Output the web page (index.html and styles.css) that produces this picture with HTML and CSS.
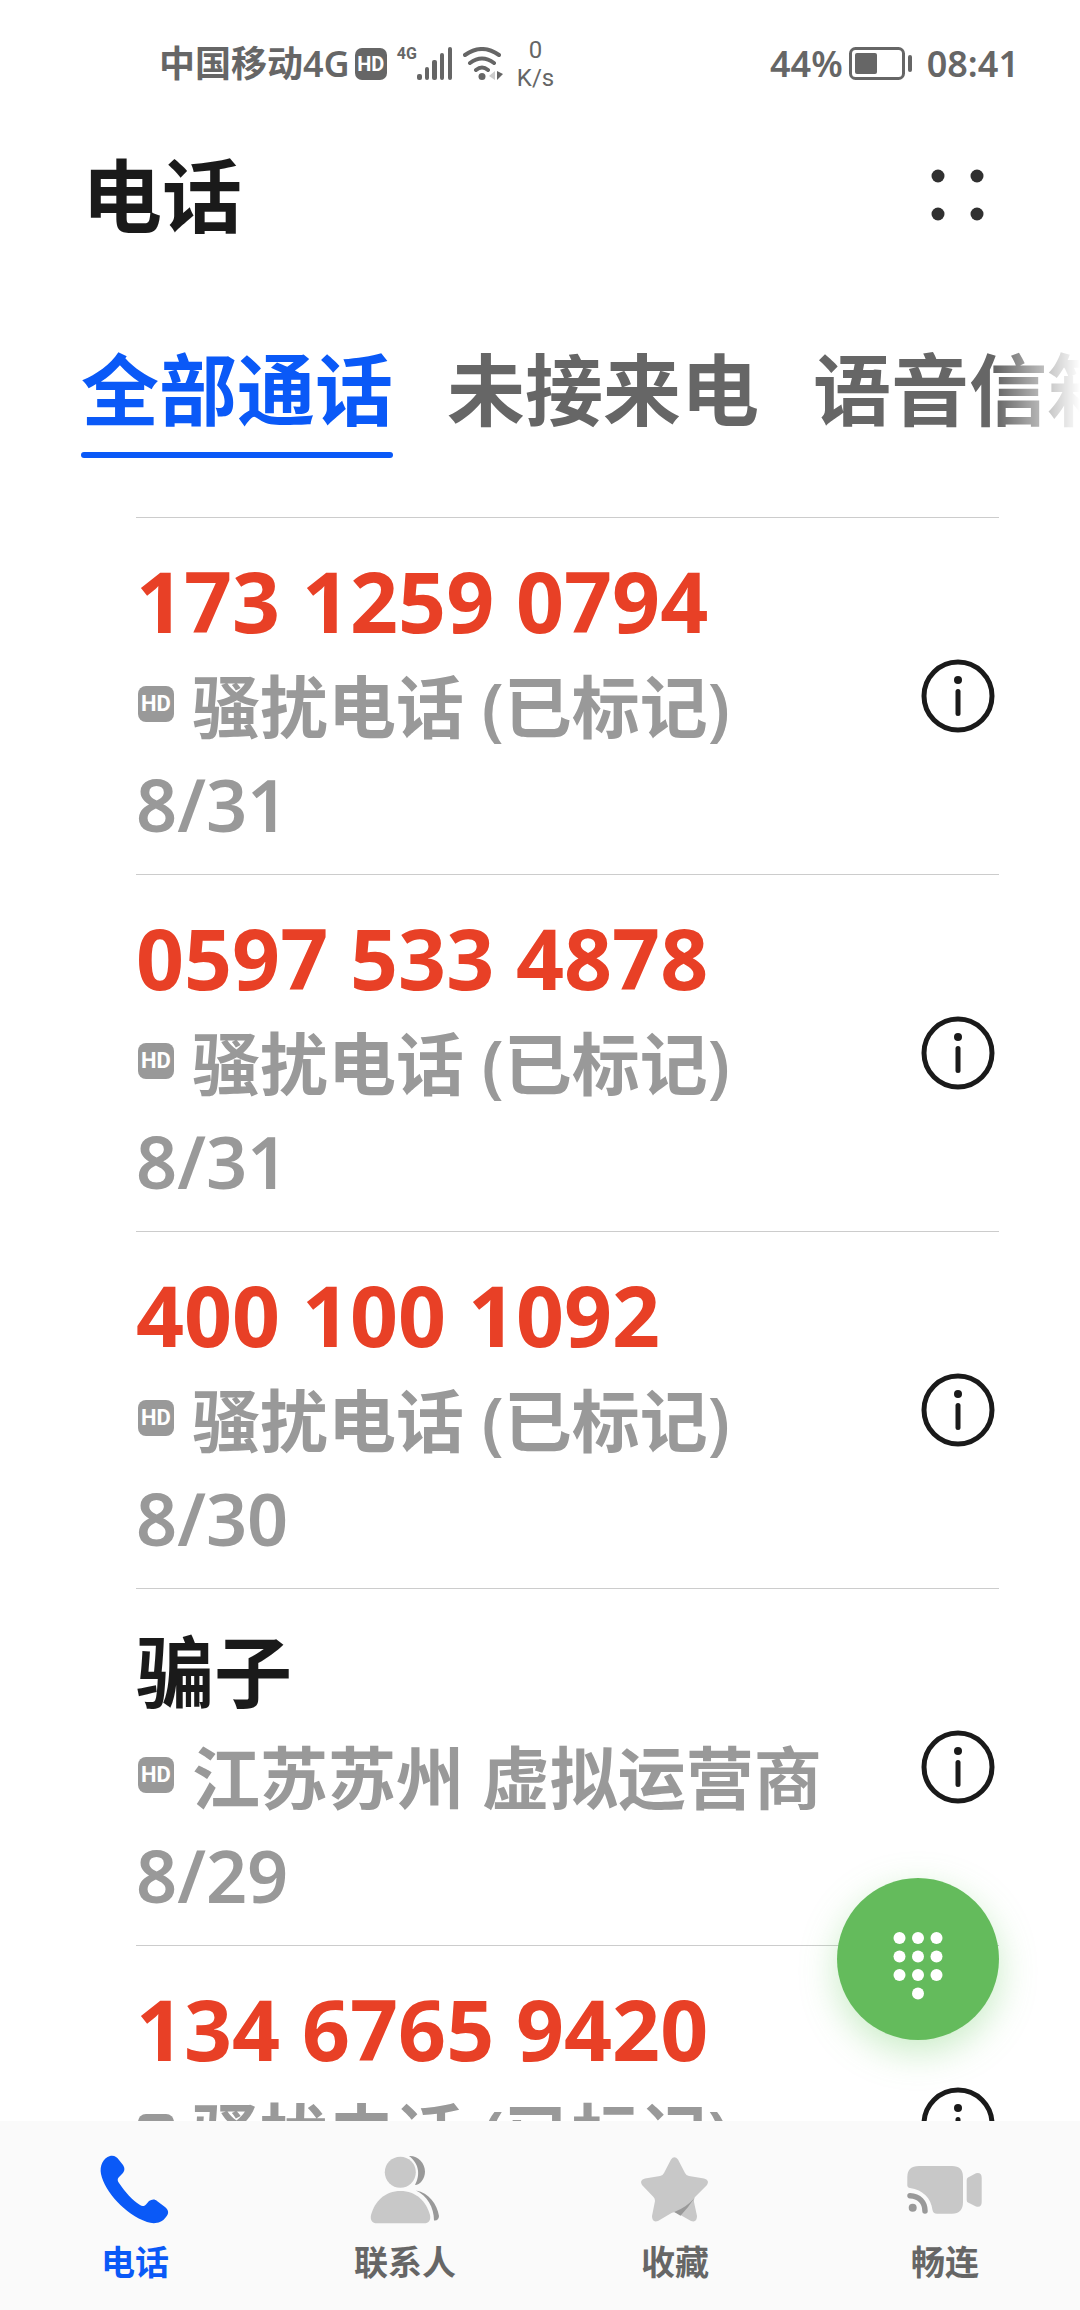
FILE: index.html
```html
<!DOCTYPE html>
<html lang="zh-CN">
<head>
<meta charset="utf-8">
<meta name="viewport" content="width=device-width, initial-scale=1">
<title>电话</title>
<link rel="stylesheet" href="styles.css">
</head>
<body>
<div class="status">
  <div class="status-left">
    <span>中国移动4G</span>
    <span class="hd hd-status">HD</span>
    <span class="net">4G</span>
    <svg class="signal" width="36" height="34" viewBox="0 0 36 34" fill="#666" aria-hidden="true">
      <rect x="0" y="27" width="5" height="6" rx="2"/><rect x="8" y="20" width="4" height="13" rx="2"/><rect x="15" y="13" width="5" height="20" rx="2"/><rect x="23" y="6" width="4" height="27" rx="2"/><rect x="31" y="0" width="4" height="33" rx="2"/>
    </svg>
    <svg class="wifi" width="42" height="34" viewBox="0 0 42 34" fill="none" stroke="#666" stroke-width="4" stroke-linecap="round" aria-hidden="true">
      <path d="M2 8Q19-4 36 8M7 16Q19 7 31 16M13 23Q19 18 25 23"/><circle cx="19" cy="29.500" r="3.500" fill="#666" stroke="none"/>
      <path d="M32 24v9l-6-4z" fill="#ccc" stroke="none"/><path d="M34 24v9l6-6z" fill="#666" stroke="none"/>
    </svg>
    <span class="speed"><span>0</span><span>K/s</span></span>
  </div>
  <div class="status-right">
    <span>44%</span>
    <svg width="64" height="34" viewBox="0 0 64 34" fill="none" aria-hidden="true">
      <rect x="1.500" y="1.500" width="53" height="30" rx="5" stroke="#666" stroke-width="3"/><rect x="6" y="6" width="22" height="21" rx="2" fill="#666"/><rect x="59" y="8" width="4" height="17" rx="2" fill="#666"/>
    </svg>
    <span class="clock">08:41</span>
  </div>
</div>
<header class="header">
  <h1>电话</h1>
  <button class="more" type="button" aria-label="更多">
    <svg width="54" height="54" viewBox="0 0 54 54" fill="#303030" aria-hidden="true"><circle cx="8" cy="8" r="6.500"/><circle cx="47" cy="8" r="6.500"/><circle cx="8" cy="46" r="6.500"/><circle cx="47" cy="46" r="6.500"/></svg>
  </button>
</header>
<nav class="tabs">
  <a class="tab tab-active" href="#all">全部通话</a>
  <a class="tab" href="#missed">未接来电</a>
  <a class="tab" href="#voicemail">语音信箱</a>
</nav>
<svg class="defs" width="0" height="0" aria-hidden="true">
  <symbol id="info" viewBox="0 0 74 74"><circle cx="37" cy="37" r="34" fill="none" stroke="#1a1a1a" stroke-width="5"/><circle cx="37" cy="21" r="4" fill="#1a1a1a"/><rect x="34.500" y="30" width="5" height="27" rx="2.500" fill="#1a1a1a"/></symbol>
</svg>
<main class="calls">
  <ul class="list">
    <li class="call">
      <div class="call-text"><div class="name spam">173 1259 0794</div><div class="place"><span class="hd">HD</span>骚扰电话 (已标记)</div><div class="date">8/31</div></div>
      <button class="info" type="button" aria-label="详情"><svg width="74" height="74"><use href="#info"/></svg></button>
    </li>
    <li class="call">
      <div class="call-text"><div class="name spam">0597 533 4878</div><div class="place"><span class="hd">HD</span>骚扰电话 (已标记)</div><div class="date">8/31</div></div>
      <button class="info" type="button" aria-label="详情"><svg width="74" height="74"><use href="#info"/></svg></button>
    </li>
    <li class="call">
      <div class="call-text"><div class="name spam">400 100 1092</div><div class="place"><span class="hd">HD</span>骚扰电话 (已标记)</div><div class="date">8/30</div></div>
      <button class="info" type="button" aria-label="详情"><svg width="74" height="74"><use href="#info"/></svg></button>
    </li>
    <li class="call">
      <div class="call-text"><div class="name contact">骗子</div><div class="place"><span class="hd">HD</span>江苏苏州 虚拟运营商</div><div class="date">8/29</div></div>
      <button class="info" type="button" aria-label="详情"><svg width="74" height="74"><use href="#info"/></svg></button>
    </li>
    <li class="call">
      <div class="call-text"><div class="name spam">134 6765 9420</div><div class="place"><span class="hd">HD</span>骚扰电话 (已标记)</div></div>
      <button class="info" type="button" aria-label="详情"><svg width="74" height="74"><use href="#info"/></svg></button>
    </li>
  </ul>
  <button class="dial" type="button" aria-label="拨号">
    <svg width="50" height="68" viewBox="0 0 50 68" fill="#fff" aria-hidden="true"><circle cx="6.500" cy="6" r="6"/><circle cx="25" cy="6" r="6"/><circle cx="43.500" cy="6" r="6"/><circle cx="6.500" cy="24.500" r="6"/><circle cx="25" cy="24.500" r="6"/><circle cx="43.500" cy="24.500" r="6"/><circle cx="6.500" cy="43" r="6"/><circle cx="25" cy="43" r="6"/><circle cx="43.500" cy="43" r="6"/><circle cx="25" cy="61.500" r="6"/></svg>
  </button>
</main>
<nav class="bottom">
  <a class="item item-active" href="#phone">
    <svg width="72" height="72" viewBox="0 0 72 72" aria-hidden="true"><path fill="#0a59f7" d="M11 2C15 1 18 3 20 6L24 11C26 14 26 17 23 20L20 23C18 25 18.500 27 20 29C26 38 33 46 41 51C43 52.500 45 52.500 47 50.500L50 47C53 45 56 45 58 47L66 53C70 56 70 60 67 63C62 70 54 70 48 68C26 60 6 38 2 20C.5 12 4 4 11 2Z"/></svg>
    <span>电话</span>
  </a>
  <a class="item" href="#contacts">
    <svg width="72" height="72" viewBox="0 0 72 72" aria-hidden="true"><g fill="#c8c8c8"><circle cx="31.300" cy="18.300" r="15.500"/><path d="M31.500 37C47 37 57 47 61 61C62 66 60 69.300 55 69.300H8C3 69.300 1 66 2 61C6 47 16 37 31.500 37Z"/></g><g fill="#999"><path d="M40 2C49 1.500 56 9 56 17.500C56 25 51 31 46 31C51 22 51 10 40 2Z"/><path d="M47 36.500C60 39 68 50 70 62C70 65 68 67 65 66.500C65 53 58 42 47 36.500Z"/></g></svg>
    <span>联系人</span>
  </a>
  <a class="item" href="#favorites">
    <svg width="72" height="72" viewBox="0 0 72 72" aria-hidden="true"><path fill="#c8c8c8" d="M32 5.500Q35.300 1 39 5.500L46 19Q47 21.500 50 22L65 24.500Q71 26 68 31L56 43Q54.500 45 55 48L58 62Q58 69 52 67L38 59Q35.300 57.500 32.500 59L19 67Q13 69 13 62L16 47Q16 44.500 14.500 43L3 31Q0 26 6 24.500L21 22Q24 21.500 25 19Z"/><path fill="#999" d="M55.500 44Q48 53 35.300 58L41.500 61.700Q49 54 55.500 44Z"/></svg>
    <span>收藏</span>
  </a>
  <a class="item" href="#meetime">
    <svg class="wide" width="72" height="72" viewBox="0 0 72 72" aria-hidden="true"><g fill="#c8c8c8"><path d="M10 12H43Q54 12 54 23V48Q54 59.700 43 59.700H28Q24 59.700 23.500 56C22 44 14 36 1 34Q-1.700 33.700-1.700 31V23Q-1.700 12 10 12Z"/><path d="M59 23.500L67 19.300Q72.700 18 72.700 24V48Q72.700 54 67 52.500L59 48.500Q57.700 48 57.700 46V26Q57.700 24 59 23.500Z"/></g><path d="M1 41.700C10 42 16 48 16 57" fill="none" stroke="#999" stroke-width="5.500" stroke-linecap="round"/><circle cx="3.700" cy="53.700" r="4" fill="#999"/></svg>
    <span>畅连</span>
  </a>
</nav>
</body>
</html>
```
FILE: styles.css
```css
* { box-sizing: border-box; }

body {
  margin: 0;
  height: 100vh;
  display: flex;
  flex-direction: column;
  overflow: hidden;
  background: #fff;
  color: #1a1a1a;
  font-family: "Noto Sans", "Noto Sans CJK SC", sans-serif;
}

button {
  padding: 0;
  border: 0;
  background: none;
}

a { color: inherit; text-decoration: none; }

svg { display: block; flex: none; }

.defs { position: absolute; }

.status {
  flex: none;
  height: 124px;
  padding: 3px 61px 0 159px;
  display: flex;
  justify-content: space-between;
  align-items: center;
  color: #666;
  font-size: 36px;
  font-weight: 600;
  line-height: 40px;
}

.status-left, .status-right {
  display: flex;
  align-items: center;
}

.status-right { gap: 6px; }
.clock { margin-left: 8px; }

.hd {
  flex: none;
  display: flex;
  align-items: center;
  justify-content: center;
  width: 36px;
  height: 36px;
  border-radius: 8px;
  background: #999;
  color: #fff;
  font: 700 22px/36px Roboto, sans-serif;
}

.hd-status {
  width: 32px;
  height: 32px;
  margin-left: 5px;
  border-radius: 7px;
  background: #666;
  font-size: 20px;
}

.net {
  align-self: flex-start;
  margin: 8px 0 0 10px;
  font: 700 16px/20px Roboto, sans-serif;
}

.wifi { margin-left: 10px; }

.speed {
  margin-left: 12px;
  display: flex;
  flex-direction: column;
  align-items: center;
  font: 400 24px/28px Roboto, sans-serif;
}

.header {
  flex: none;
  height: 142px;
  padding: 0 96px 0 82px;
  display: flex;
  justify-content: space-between;
  align-items: center;
}

h1 {
  margin: 0;
  font-size: 80px;
  font-weight: 700;
  line-height: 100px;
}

.tabs {
  flex: none;
  height: 251px;
  padding: 66px 0 0 81px;
  display: flex;
  align-items: flex-start;
  gap: 54px;
  overflow: hidden;
  -webkit-mask-image: linear-gradient(to right, #000 calc(100% - 84px), transparent);
  mask-image: linear-gradient(to right, #000 calc(100% - 84px), transparent);
}

.tab {
  flex: none;
  height: 126px;
  color: #666;
  font-size: 78px;
  font-weight: 700;
  line-height: 116px;
  white-space: nowrap;
}

.tab-active {
  color: #0a59f7;
  position: relative;
}

.tab-active::after {
  content: "";
  position: absolute;
  left: 0;
  right: 0;
  bottom: 0;
  height: 6px;
  border-radius: 3px;
  background: #0a59f7;
}

.calls {
  flex: 1 1 0;
  min-height: 0;
  position: relative;
  overflow: hidden;
}

.list {
  margin: 0;
  padding: 0 81px 0 136px;
  list-style: none;
}

.call {
  height: 357px;
  padding-top: 28px;
  display: flex;
  justify-content: space-between;
  border-top: 1px solid #ccc;
}

.name {
  font-size: 84px;
  font-weight: 700;
  line-height: 110px;
}

.spam { color: #e84026; }
.contact { font-size: 78px; }

.place, .date {
  color: #999;
  font-size: 68px;
  font-weight: 600;
  line-height: 99px;
}

.place { line-height: 101px; }

.date {
  font-size: 72px;
  line-height: 95px;
}

.place {
  display: flex;
  align-items: center;
  gap: 18px;
}

.place .hd { margin: 0 0 5px 2px; }

.info {
  width: 74px;
  height: 74px;
  margin: 113px 4px 0 0;
}

.dial {
  position: absolute;
  right: 81px;
  bottom: 81px;
  width: 162px;
  height: 162px;
  padding-top: 14px;
  border-radius: 50%;
  background: #64bb5c;
  box-shadow: 0 12px 36px rgba(100, 200, 92, 0.35);
  display: flex;
  align-items: center;
  justify-content: center;
}

.bottom {
  flex: none;
  height: 189px;
  padding-top: 33px;
  display: grid;
  grid-template-columns: repeat(4, 1fr);
  background: #fafafa;
}

.item {
  display: flex;
  flex-direction: column;
  align-items: center;
  gap: 16px;
  color: #666;
  font-size: 34px;
  font-weight: 700;
  line-height: 40px;
}

.item-active { color: #0a59f7; }

.wide { overflow: visible; }
```
